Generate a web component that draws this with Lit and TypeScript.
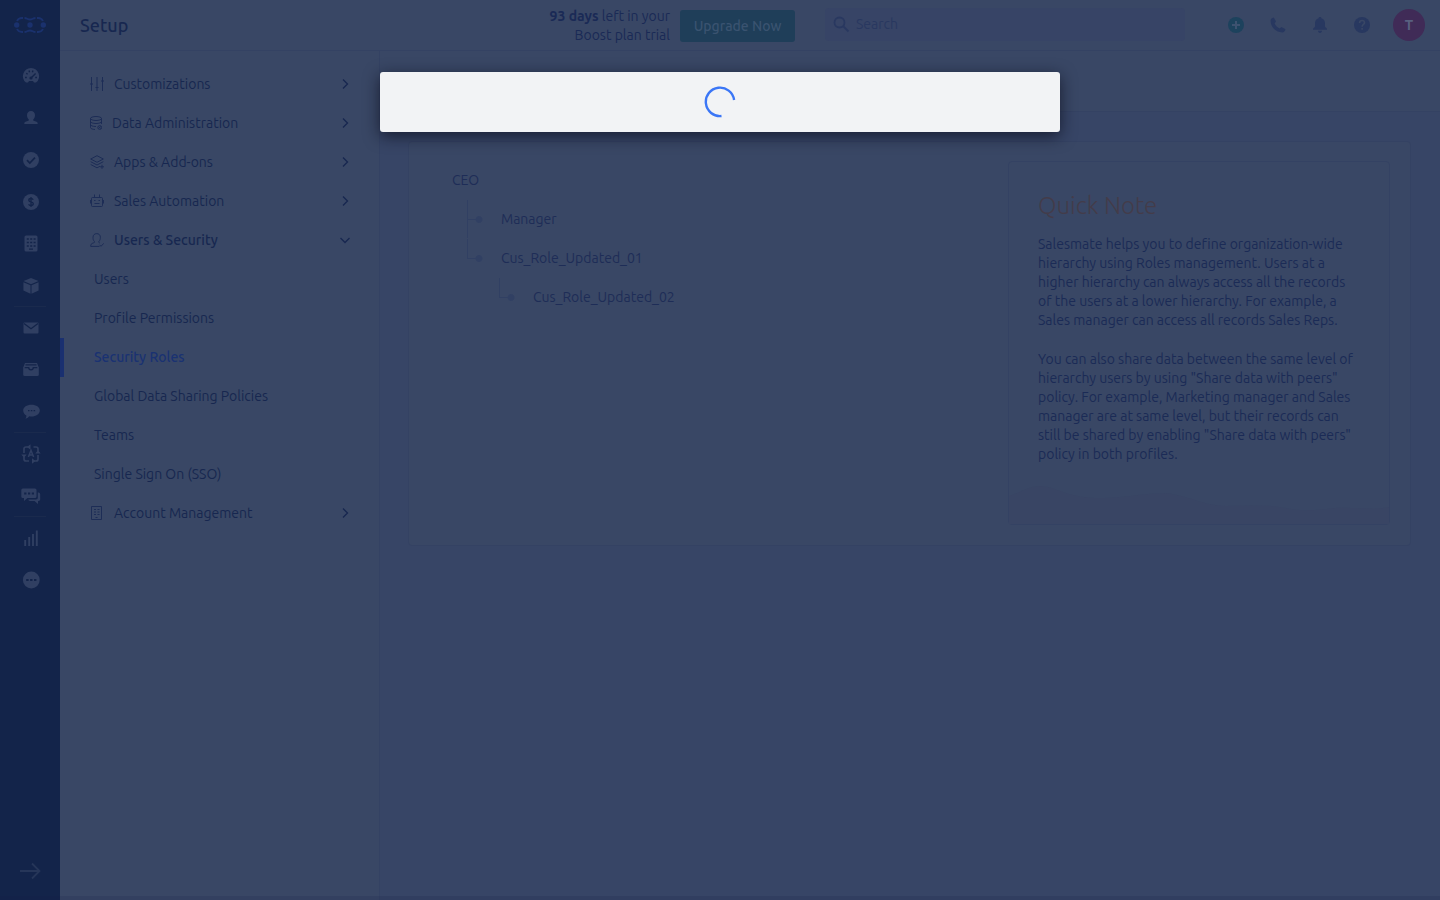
import { LitElement, html, css, svg, nothing } from "lit";
import { customElement, state } from "lit/decorators.js";
import { classMap } from "lit/directives/class-map.js";

const hole = "#13244a";

const railIcons: Record<string, unknown> = {
  dashboard: svg`<path d="M10 2a8.200 8.200 0 0 0-5 14.600h2l1-1.600h4l1 1.600h2A8.200 8.200 0 0 0 10 2z" fill="currentColor"/><path d="M4 11.500h1.800M5.300 7.300l1.300 1M8 4.600l.6 1.600M12 4.600l-.6 1.600M14.200 11.500H16M14.600 7.500 10 12" stroke="${hole}" stroke-width="1.400" fill="none"/><circle cx="10" cy="12" r="1.600" fill="${hole}"/>`,
  contact: svg`<path d="M10 3c2.500 0 4 1.800 4 4.200 0 1.800-.8 3.500-1.800 4.300v1l3.200 1.200c1 .4 1.300 1 1.300 2.300H3.300c0-1.300.3-1.900 1.300-2.300l3.200-1.200v-1C6.800 10.700 6 9 6 7.200 6 4.800 7.500 3 10 3z" fill="currentColor"/>`,
  check: svg`<circle cx="10" cy="10" r="8" fill="currentColor"/><path d="m6 10.200 2.800 2.800L14 7.600" stroke="${hole}" stroke-width="1.700" fill="none"/>`,
  deal: svg`<circle cx="10" cy="10" r="8" fill="currentColor"/><path d="M12.200 7.700c-.4-.8-1.200-1.200-2.200-1.200-1.300 0-2.200.7-2.200 1.700 0 2.300 4.500 1.200 4.500 3.600 0 1-.9 1.700-2.300 1.700-1.100 0-2-.5-2.400-1.300M10 5v10" stroke="${hole}" stroke-width="1.300" fill="none"/>`,
  company: svg`<rect x="3.500" y="1.500" width="13" height="16" rx="1.500" fill="currentColor"/><path d="M5.800 5h2m1.400 0h2m1.400 0h2M5.800 8.500h2m1.400 0h2m1.400 0h2M5.800 12h2m1.400 0h2m1.400 0h2M8 15.100h4" stroke="${hole}" stroke-width="1.300"/>`,
  product: svg`<path d="M10 2 17.500 5 10 8.300 2.500 5zM2.400 6.200 9.500 9.300v8.500L2.400 14.500zM17.600 6.200l-7.100 3.100v8.500l7.100-3.300z" fill="currentColor"/>`,
  mail: svg`<rect x="2.500" y="4.500" width="15" height="11" rx="1" fill="currentColor"/><path d="m3 5.500 7 5.300 7-5.300" stroke="${hole}" stroke-width="1.300" fill="none"/>`,
  inbox: svg`<path d="M4 3h12l1.800 4.500v7a1.500 1.500 0 0 1-1.500 1.500H3.700a1.500 1.500 0 0 1-1.500-1.500v-7z" fill="currentColor"/><path d="M4.500 4.800h11M3.700 7.600h4c0 3 4.600 3 4.600 0h4" stroke="${hole}" stroke-width="1.300" fill="none"/>`,
  chat: svg`<path d="M10.500 2.700c4.700 0 8.300 2.400 8.300 5.800s-3.600 6-8.300 6c-.8 0-1.600-.1-2.300-.2-.7.9-2 2-3.700 2.500.7-1 1-2.200.9-3.200-1.900-1-3.200-2.900-3.200-5.100 0-3.400 3.600-5.800 8.300-5.800z" fill="currentColor"/><path d="M7 8.700h1.500m1.300 0h1.500m1.300 0h1.500" stroke="${hole}" stroke-width="1.200"/>`,
  automation: svg`<path d="M12.500 3H15a2 2 0 0 1 2 2v3M17 11v4a2 2 0 0 1-2 2h-3M8 17H5a2 2 0 0 1-2-2v-3M3 9V5a2 2 0 0 1 2-2h4" fill="none" stroke="currentColor" stroke-width="1.700"/><path d="M9.500.3v5.400L6 3zM.3 10.500h5.400L3 13.700zM11 14.300v5.400l3.500-2.700zM14.300 9.500h5.400L17 6.300z" fill="currentColor"/><path d="m7.400 13 2.600-6.600L12.600 13M8.400 11h3.200" fill="none" stroke="currentColor" stroke-width="1.500"/>`,
  messages: svg`<path d="M1.800 2.500H14A1.500 1.500 0 0 1 15.500 4v6.500A1.500 1.500 0 0 1 14 12H6.500L3 15v-3H1.800A1.500 1.500 0 0 1 .3 10.500V4a1.500 1.500 0 0 1 1.500-1.500z" fill="currentColor"/><path d="M16.800 6.500c1.400 0 2.400.6 2.400 2v4.700c0 1-.6 1.700-1.600 1.700H17v3l-3.500-2.900H9c-1 0-1.600-.5-1.700-1.400h7.500c1.400 0 2-.8 2-2z" fill="currentColor"/><path d="M3.200 7.500h2.200m1.600 0h2.200m1.600 0H13" stroke="${hole}" stroke-width="1.900"/>`,
  reports: svg`<path d="M4.200 18v-6M8.200 18V9M12 18V6M15.800 18V2.500" stroke="currentColor" stroke-width="1.900"/>`,
  more: svg`<circle cx="10.300" cy="10" r="8.400" fill="currentColor"/><path d="M5.200 10h2.400m1.500 0h2.400m1.500 0h2.400" stroke="${hole}" stroke-width="2"/>`,
};

const rail = [
  { id: "dashboard", label: "Dashboard" },
  { id: "contact", label: "Contacts" },
  { id: "check", label: "Activities" },
  { id: "deal", label: "Deals" },
  { id: "company", label: "Companies" },
  { id: "product", label: "Products", divide: true },
  { id: "mail", label: "Emails" },
  { id: "inbox", label: "Inbox" },
  { id: "chat", label: "Chats", divide: true },
  { id: "automation", label: "Automation" },
  { id: "messages", label: "Messages", divide: true },
  { id: "reports", label: "Reports" },
  { id: "more", label: "More" },
];

const navIcons: Record<string, unknown> = {
  sliders: svg`<path d="M1.500 0v14M7 0v14M12.500 0v14M0 7h3M5.500 10.500h3M11 4h3"/>`,
  database: svg`<ellipse cx="6" cy="2.500" rx="5.500" ry="2"/><path d="M.5 2.500v9c0 1 2 1.900 4.500 2M11.500 2.500V8M.5 5.500c0 1.200 2.500 2 5.500 2s5.500-.8 5.500-2M.5 8.500c0 1.200 2.300 2 5.500 2"/><circle cx="9.700" cy="11.500" r="1.900"/><path d="m8.700 10.500 2 2m0-2-2 2"/>`,
  layers: svg`<path d="M7 .7 13.300 4 7 7.300.7 4zM.7 6.700 7 10l6.300-3.300M.7 9.500 7 12.800l3-1.500M12 9.800v4M10 11.800h4"/>`,
  robot: svg`<rect x="1.500" y="3.500" width="11" height="9" rx="1"/><path d="M4.500.5v3M9.500.5v3M.5 6v3.500M13.500 6v3.500M4.500 9.500h5M4 6.500h1.500M8.500 6.500H10"/>`,
  user: svg`<path d="M9.500 13.400H.7c0-2 .6-2.800 2.200-3.300 1.400-.4 1.900-.7 1.600-1.500C3.200 7.400 3 5.800 3 4.300 3 2 4.600.6 6.700.6s3.700 1.400 3.700 3.700c0 1.500-.4 3.100-1.600 4.300-.3.700.1 1.100 1 1.400M9.500 11.800l1.500 1.500 2.800-3"/>`,
  building: svg`<path d="M1.500.5h10v13h-10zM4 3.500h2m1.500 0h2M4 6h2m1.500 0h2M4 8.500h2m1.500 0h2M5.500 11.500h2"/>`,
};

const sections = [
  { icon: "sliders", label: "Customizations" },
  { icon: "database", label: "Data Administration", width: 12 },
  { icon: "layers", label: "Apps & Add-ons" },
  { icon: "robot", label: "Sales Automation" },
  {
    icon: "user",
    label: "Users & Security",
    open: true,
    children: ["Users", "Profile Permissions", "Security Roles", "Global Data Sharing Policies", "Teams", "Single Sign On (SSO)"],
  },
  { icon: "building", label: "Account Management" },
];

@customElement("app-root")
export class AppRoot extends LitElement {
  @state() private active = "Security Roles";

  static styles = css`
    :host {
      display: block;
      position: relative;
      min-height: 100vh;
      font: 14px/19px Ubuntu, "Noto Sans", sans-serif;
      font-variant-ligatures: none;
      color: #172750;
      --surface: #394765;
      --line: #344263;
      --branch: #314063;
    }
    * { box-sizing: border-box; }
    button, input { font: inherit; color: inherit; border: 0; padding: 0; background: none; }
    a { color: inherit; text-decoration: none; }
    ul { list-style: none; margin: 0; padding: 0; }
    h1, h2, p { margin: 0; }
    .shell { display: grid; grid-template-columns: 60px minmax(0, 1fr); min-height: 100vh; background: #374566; }
    .rail { display: flex; flex-direction: column; align-items: center; background: #13244a; color: #303f62; }
    .logo { display: flex; align-items: center; height: 50px; color: #1a316d; margin-bottom: 5px; }
    .rail-list { display: flex; flex-direction: column; width: 32px; }
    .rail-item { border-bottom: 1px solid transparent; }
    .rail-item.divide { border-color: #1a2a4d; }
    .rail-link { display: flex; justify-content: center; align-items: center; height: 41px; padding-left: 2px; }
    .expand { margin-top: auto; height: 58px; color: #263659; }
    .page { display: flex; flex-direction: column; }
    .header { display: flex; align-items: center; height: 51px; padding: 0 15px 0 20px; background: var(--surface); border-bottom: 1px solid var(--line); }
    .title { font-size: 18px; line-height: 24px; font-weight: 500; flex: 1; }
    .plan { display: flex; align-items: center; gap: 10px; padding-top: 2px; margin-right: 30px; color: #1a2a56; }
    .trial { text-align: right; }
    .trial b { font-weight: 700; }
    .upgrade { width: 115px; height: 32px; border-radius: 3px; background: #1f3e59; color: #3a5370; font-weight: 500; }
    .search { display: flex; align-items: center; gap: 6px; flex: 0 1 360px; height: 33px; margin: 0 41px 1px 0; padding: 0 0 1px 8px; border-radius: 4px; background: #374466; color: #293860; }
    .search input { flex: 1; min-width: 0; outline: 0; }
    .search input::placeholder { color: #293860; opacity: 1; }
    .tools { display: flex; gap: 22px; align-items: center; color: #283860; }
    .tool { display: flex; width: 20px; height: 20px; }
    .tool.add { color: #1d425d; }
    .avatar { width: 32px; height: 32px; margin-left: -1px; border-radius: 50%; background: #402b57; color: #596080; font-weight: 700; }
    .body { display: grid; grid-template-columns: 320px minmax(0, 1fr); flex: 1; }
    .nav { padding: 14px 0; background: var(--surface); border-right: 1px solid var(--line); }
    .section { display: flex; align-items: center; gap: 10px; width: 100%; height: 39px; padding: 0 28px 0 30px; text-align: left; }
    .section span { flex: 1; }
    .section svg { margin-bottom: 2px; }
    .section .glyph { color: #1d2d56; }
    .section.open { font-weight: 500; }
    .sub { display: flex; align-items: center; height: 39px; padding-left: 30px; border-left: 4px solid transparent; }
    .sub.active { border-color: #1a3070; color: #1a3272; font-weight: 500; }
    .bar { height: 61px; background: var(--surface); border-bottom: 1px solid var(--line); }
    .card { display: grid; grid-template-columns: minmax(0, 1fr) 382px; margin: 29px 29px 0 28px; padding: 19px 20px 20px; background: var(--surface); border: 1px solid var(--line); border-radius: 4px; }
    .tree { padding-left: 23px; color: #1e2d57; }
    .role { display: flex; align-items: center; height: 39px; }
    .tree ul { padding-left: 15px; }
    .tree ul ul { padding-left: 32px; }
    .branch { position: relative; }
    .branch > .role { gap: 18px; }
    .branch > .role::before { content: ""; width: 16px; height: 7px; background: radial-gradient(circle at 12px 50%, var(--branch) 3px, transparent 4px), linear-gradient(var(--branch), var(--branch)) 0 50% / 12px 1px no-repeat; }
    .branch::before { content: ""; position: absolute; top: 0; width: 1px; height: 20px; background: var(--branch); }
    .branch.more::before { height: 38px; }
    .note { border: 1px solid var(--line); border-radius: 4px; color: #1b2b56; }
    .note-text { padding: 30px 29px 0; }
    .note h2 { font-size: 24px; line-height: 28px; font-weight: 300; color: #433c4a; margin-bottom: 15px; }
    .note p { margin-bottom: 20px; }
    .note p:last-child { margin: 0; }
    .wave { width: 100%; height: 60px; color: #394564; }
    .modal-layer { position: absolute; inset: 0; padding-top: 72px; border-bottom: 4px solid rgba(20, 30, 70, 0.15); }
    .modal { display: grid; place-items: center; width: 680px; max-width: 90%; height: 60px; margin: 0 auto; border-radius: 3px; background: #f2f3f5; box-shadow: 0 4px 16px rgba(10, 12, 25, 0.7); }
    svg { flex: none; display: block; }
  `;

  private chevron(open?: boolean) {
    return html`<svg width="12" height="12" viewBox="0 0 12 12" fill="none" stroke="currentColor" stroke-width="1.300"><path d=${open ? "M1.500 4 6 8.500 10.500 4" : "M4 1.500 8.500 6l-4.500 4.500"} /></svg>`;
  }

  render() {
    return html`
      <div class="shell">
        <nav class="rail" aria-label="Modules">
          <a class="logo" href="#" aria-label="Home">
            <svg width="32" height="16" viewBox="0 0 32 16" fill="none" stroke="currentColor" stroke-width="1.800">
              <path d="M3 4C4 1.800 5.500 1 8 1h1M10.500 1c2.500 0 3 1.500 5.500 1.500S19 1 21.500 1M23 1h1c2.500 0 4 .8 5 3M3 12c1 2.200 2.500 3 5 3h1M10.500 15c2.500 0 3-1.500 5.500-1.500s3 1.500 5.500 1.500M23 15h1c2.500 0 4-.8 5-3" />
              <g fill="currentColor" stroke="none"><circle cx="2.700" cy="8" r="2.700" /><circle cx="16" cy="8" r="2.700" /><circle cx="29.300" cy="8" r="2.700" /></g>
            </svg>
          </a>
          <ul class="rail-list">
            ${rail.map(
              (r) => html`<li class=${classMap({ "rail-item": true, divide: !!r.divide })}>
                <a class="rail-link" href="#" aria-label=${r.label}><svg width="20" height="20" viewBox="0 0 20 20">${railIcons[r.id]}</svg></a>
              </li>`
            )}
          </ul>
          <button class="expand" aria-label="Expand menu">
            <svg width="22" height="18" viewBox="0 0 22 18" fill="none" stroke="currentColor" stroke-width="1.800"><path d="M1 9h19M13 1.500 20.500 9 13 16.500" /></svg>
          </button>
        </nav>
        <div class="page">
          <header class="header">
            <h1 class="title">Setup</h1>
            <div class="plan">
              <p class="trial"><b>93 days</b> left in your<br />Boost plan trial</p>
              <button class="upgrade">Upgrade Now</button>
            </div>
            <label class="search">
              <svg width="17" height="17" viewBox="0 0 17 17" fill="none" stroke="currentColor" stroke-width="1.800"><circle cx="6.500" cy="6.500" r="5" /><path d="m10 10 5.500 5.500" /></svg>
              <input type="search" placeholder="Search" aria-label="Search" />
            </label>
            <div class="tools">
              <button class="tool add" aria-label="Add"><svg width="20" height="20" viewBox="0 0 20 20"><circle cx="10" cy="10" r="8" fill="currentColor" /><path d="M10 6v8M6 10h8" stroke="#3d5270" stroke-width="2" /></svg></button>
              <button class="tool" aria-label="Call"><svg width="20" height="20" viewBox="0 0 20 20"><path d="M5.800 2.500 8 6.600 6.600 8.400c1 2.200 2.700 3.900 5 5l1.800-1.500 4.100 2.300c-.4 1.900-1.500 3.200-3.300 3.200C8 17.400 2.600 12 2.600 5.800c0-1.800 1.300-2.900 3.200-3.300z" fill="currentColor" /></svg></button>
              <button class="tool" aria-label="Notifications"><svg width="20" height="20" viewBox="0 0 20 20"><path d="M10 2c.8 0 1.400.5 1.400 1.300 2.300.6 3.600 2.500 3.600 4.900v3.600l2 2v1H3v-1l2-2V8.200c0-2.400 1.300-4.300 3.600-4.900C8.600 2.500 9.200 2 10 2zM8 15.800h4c0 1.200-.8 2.200-2 2.200s-2-1-2-2.200z" fill="currentColor" /></svg></button>
              <button class="tool" aria-label="Help"><svg width="20" height="20" viewBox="0 0 20 20"><circle cx="10" cy="10" r="8" fill="currentColor" /><path d="M7.600 8c0-1.500 1-2.500 2.500-2.500s2.400.9 2.400 2.200c0 1.700-2.400 1.900-2.400 4M10.100 13v1.700" stroke="#394765" stroke-width="1.600" fill="none" /></svg></button>
              <button class="avatar" aria-label="Account">T</button>
            </div>
          </header>
          <div class="body">
            <nav class="nav" aria-label="Setup">
              ${sections.map(
                (s) => html`
                  <button class=${classMap({ section: true, open: !!s.open })} aria-expanded=${s.open ? "true" : "false"}>
                    <svg class="glyph" width=${s.width ?? 14} height="14" viewBox="0 0 ${s.width ?? 14} 14" fill="none" stroke="currentColor" stroke-width="1">${navIcons[s.icon]}</svg>
                    <span>${s.label}</span>${this.chevron(s.open)}
                  </button>
                  ${s.children
                    ? html`<ul>
                        ${s.children.map(
                          (c) => html`<li><a class=${classMap({ sub: true, active: c === this.active })} href="#" @click=${() => (this.active = c)}>${c}</a></li>`
                        )}
                      </ul>`
                    : nothing}
                `
              )}
            </nav>
            <main>
              <div class="bar"></div>
              <section class="card">
                <div class="tree">
                  <div class="role">CEO</div>
                  <ul>
                    <li class="branch more"><div class="role">Manager</div></li>
                    <li class="branch">
                      <div class="role">Cus_Role_Updated_01</div>
                      <ul>
                        <li class="branch"><div class="role">Cus_Role_Updated_02</div></li>
                      </ul>
                    </li>
                  </ul>
                </div>
                <aside class="note">
                  <div class="note-text">
                    <h2>Quick Note</h2>
                    <p>Salesmate helps you to define organization-wide hierarchy using Roles management. Users at a higher hierarchy can always access all the records of the users at a lower hierarchy. For example, a Sales manager can access all records Sales Reps.</p>
                    <p>You can also share data between the same level of hierarchy users by using "Share data with peers" policy. For example, Marketing manager and Sales manager are at same level, but their records can still be shared by enabling "Share data with peers" policy in both profiles.</p>
                  </div>
                  <svg class="wave" viewBox="0 0 380 60" preserveAspectRatio="none"><path d="M0 32C15 27 20 22 32 22c20 2 25 12 60 12 22 0 35-4 65-5 25 3 35 12 60 13 20 0 40-2 60 2 30 6 40-2 65 0 15 0 25 2 38-1v17H0z" fill="currentColor" /></svg>
                </aside>
              </section>
            </main>
          </div>
        </div>
      </div>
      <div class="modal-layer">
        <div class="modal" role="dialog" aria-modal="true" aria-label="Loading">
          <svg width="32" height="32" viewBox="0 0 32 32" fill="none" stroke="#3b76f6" stroke-width="2.400"><path d="M17.500 30A14.200 14.200 0 1 1 30.100 14" /></svg>
        </div>
      </div>
    `;
  }
}
